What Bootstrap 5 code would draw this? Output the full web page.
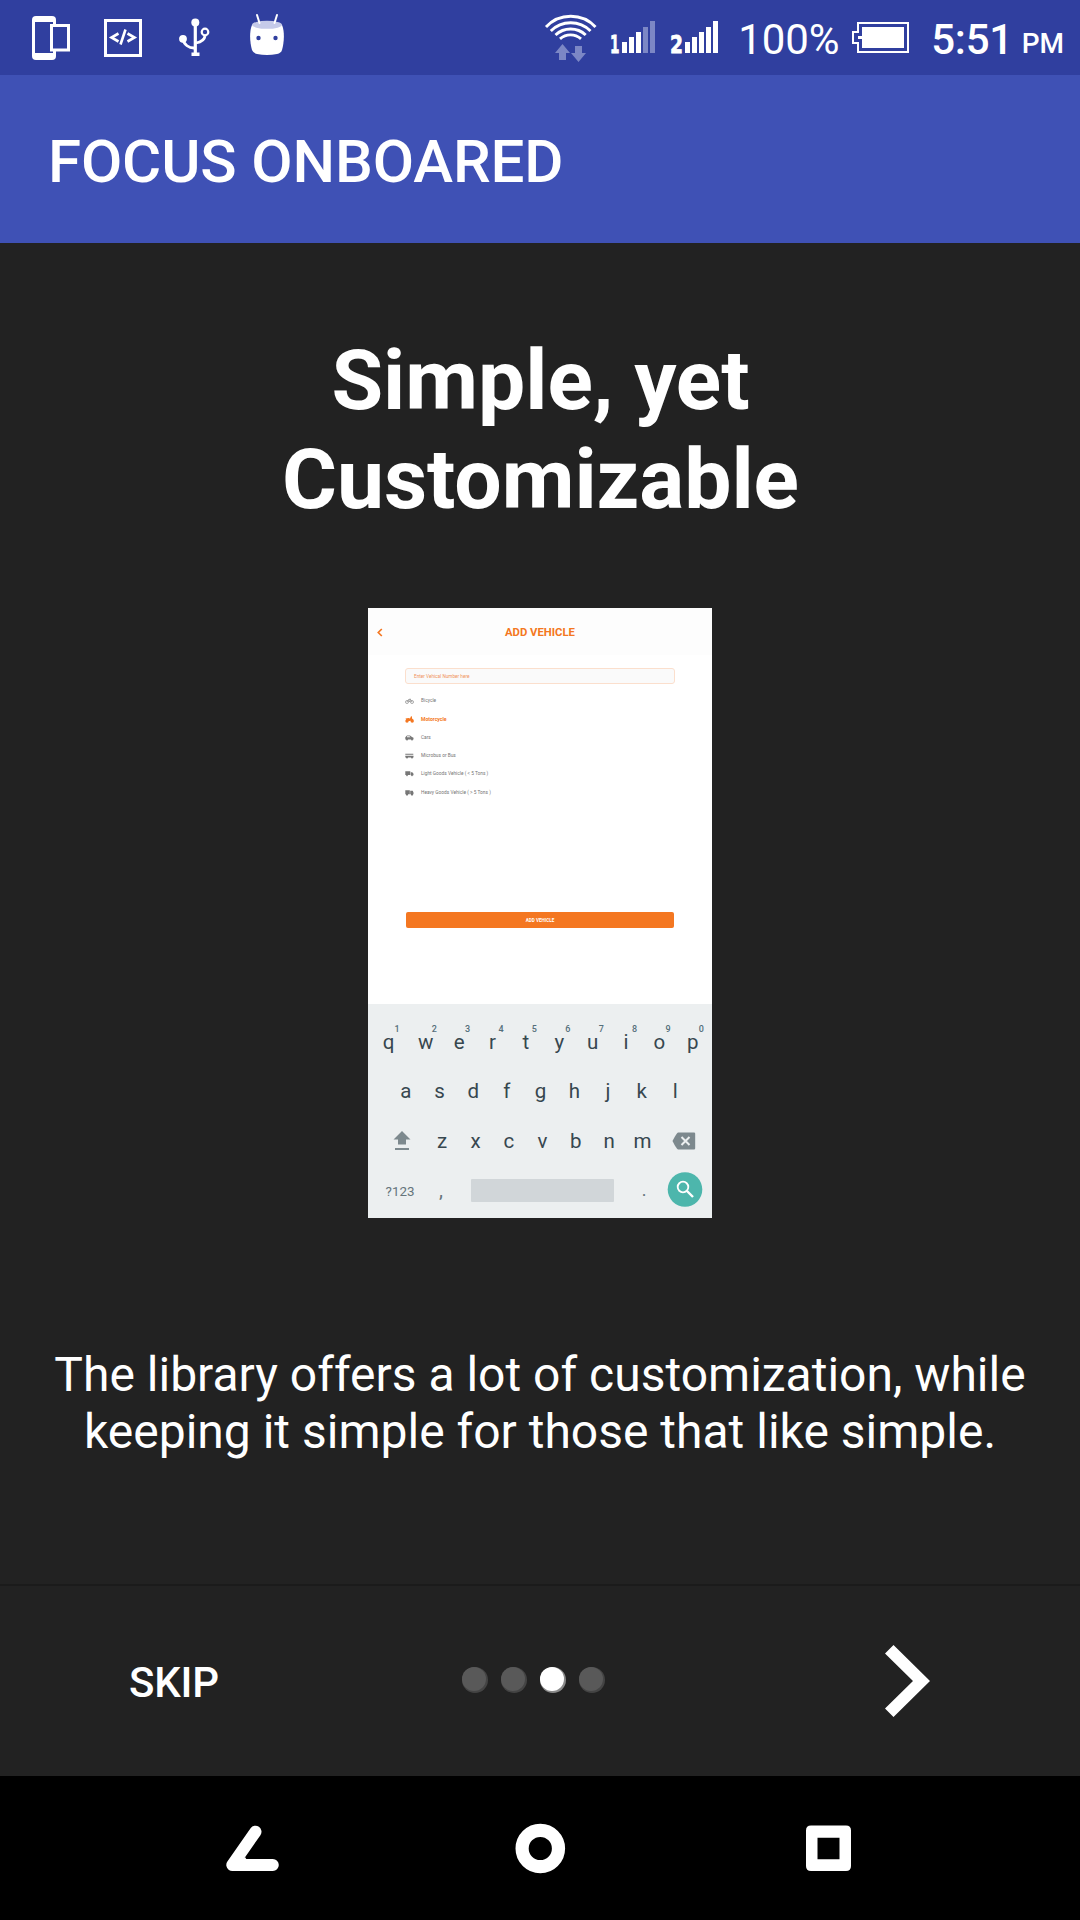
<!DOCTYPE html>
<html lang="en">
<head>
<meta charset="utf-8">
<meta name="viewport" content="width=device-width, initial-scale=1">
<title>Focus Onboared</title>
<link href="https://cdn.jsdelivr.net/npm/bootstrap@5.3.0/dist/css/bootstrap.min.css" rel="stylesheet">
<style>
body{font-family:Roboto,"Noto Sans",sans-serif;background:#222;color:#fff;width:1080px;height:1920px;overflow:hidden;margin:0}
svg{display:block;flex:none}
.status-bar{height:75px;background:#303f9f}
.status-bar svg{height:75px}
.battery-pct,.clock,.clock-pm{line-height:49px;white-space:nowrap}
.battery-pct{font-size:42px;margin-left:14px;margin-top:15px;width:118px;letter-spacing:-.1px}
.battery-icon{margin-left:-4px}
.clock{font-size:42px;font-weight:500;margin-left:21px;margin-top:15px;width:90.500px;letter-spacing:-.2px}
.clock-pm{font-size:28px;font-weight:500;margin-top:19px;margin-right:16px}
.app-bar{height:168px;background:#3f51b5;padding:5px 0 0 48px}
.app-title{font-size:60px;font-weight:500;line-height:70px;letter-spacing:-.13px}
.slide{height:1341px;padding-top:88px}
.slide-title{font-size:84px;font-weight:700;line-height:99px;width:601px;margin:0 0 0 1px;letter-spacing:-.05px}
.slide-text{font-size:48px;line-height:57px;margin:128px 0 0;white-space:nowrap}
.shot{width:344px;height:610px;margin-top:79px;background:#fff;color:#757575}
.shot-head{height:47px;background:#fdfdfd;color:#f47721;padding-left:9px;padding-top:1px}
.shot-head span{font-size:11.3px;font-weight:700;line-height:14px;width:70px;margin-left:122px;margin-top:1px;white-space:nowrap}
.shot-field{height:16px;margin:13px 37px 0 37px;border:1px solid #fbdfcd;border-radius:3px;background:#fafafa;color:#f0935a;font-size:4.7px;line-height:15px;padding-left:8px}
.veh-list{padding-top:8px}
.veh{font-size:4.8px;line-height:6px;height:18.3px;padding-left:37px;gap:7px}
.veh.active{color:#f47721;font-weight:700}
.veh.active span{font-size:5.1px}
.shot-btn{height:16px;margin:0 38px 76px;background:#f47721;color:#fff;border-radius:2px;font-size:4.6px;font-weight:700;line-height:17px}
.shot-body{height:349px}
.keys{height:214px;background:#eceff0;color:#37474f;font-size:20.500px;padding-top:14px}
.krow{height:49px;line-height:48px}
.krow>span{width:33.4px;text-align:center;flex:none;position:relative}
.krow>span.edge-key{width:41px}
.krow sup{position:absolute;left:calc(50% + 6px);top:-3px;font-size:9px;line-height:28px;color:#546e7a;font-weight:500}
.row-a{padding-left:21px}.krow.row-a>span{width:33.7px}
.row-z{padding-left:25px}
.row-z svg:first-child{margin-right:14.500px}
.row-z svg:last-child{margin-left:13px}
.krow>span.sym{width:30px;font-size:13.4px;font-weight:400;color:#66757c;padding-top:4px}
.krow>span.sym-num{margin:0 11px 0 17px}
.krow>span.sym-comma{font-size:20px;padding-top:0}
.krow>span.sym-dot{font-size:18px;margin-left:15px;padding-top:0}
.space-bar{width:143px;height:23px;background:#d1d6d9;border-radius:1px;margin:1px 0 0 15px}
.bottom-bar{height:192px;border-top:2px solid #1b1b1b}
.skip{font-size:42px;font-weight:500;line-height:49px;width:90px;margin:3px 0 0 129px;letter-spacing:-.2px}
.dots{gap:13px;margin-left:243px;margin-top:-2px}
.pager{width:26px;height:26px;border-radius:50%;background:#444}
.pager::before{content:"";display:block;width:24px;height:24px;border-radius:50%;background:#595959}
.pager.on{background:#8a8a8a}.pager.on::before{background:#fff}
.next-icon{margin-left:280px}
.nav-keys{height:144px;background:#000}
</style>
<script src="https://cdn.jsdelivr.net/npm/bootstrap@5.3.0/dist/js/bootstrap.bundle.min.js"></script>
</head>
<body class="d-flex flex-column">
<header class="status-bar d-flex justify-content-between flex-shrink-0">
  <div class="d-flex">
    <svg width="300" viewBox="0 0 300 75" fill="none" stroke="#fff">
      <rect x="32" y="16" width="24" height="44" rx="4" fill="#fff" stroke="none"/>
      <path fill="#303f9f" stroke="none" d="M35 22h18v31H35z"/>
      <path fill="#303f9f" stroke="none" d="M49 24h8v27h-8z"/>
      <rect x="51.500" y="25.500" width="17" height="24.500" stroke-width="3" fill="#303f9f"/>
      <rect x="105.500" y="20.500" width="35" height="35" stroke-width="3"/>
      <path stroke-width="2.600" d="M118.500 33.500l-7 4 7 4M127.500 33.500l7 4-7 4M125.500 29.500l-5 15"/>
      <circle cx="195.300" cy="22.500" r="4" fill="#fff" stroke="none"/>
      <path stroke-width="3.200" d="M195.300 22v33"/>
      <path stroke-width="2.800" d="M183 39c1 6 6 9 11 9M205 36c-.5 4-4 6-9 7"/>
      <circle cx="183" cy="38.800" r="3.900" fill="#fff" stroke="none"/>
      <circle cx="205" cy="32" r="3.300" stroke-width="2.200"/>
      <path fill="#fff" stroke="none" d="M191.500 52.500h8v3.500h-8z"/>
      <path fill="#fff" stroke="none" d="M252 25c-3 7-2 18 0 25q1 3 5 4 10 2 20 0 4-1 5-4c2-7 3-18 0-25z"/>
      <ellipse cx="267" cy="24.800" rx="15" ry="4" fill="#c5cae9" stroke="none"/>
      <path stroke-width="2" stroke-linecap="round" d="M259.500 23l-2.500-8M274.500 23l2.500-8"/>
      <g fill="#303f9f" stroke="none"><circle cx="258.500" cy="38" r="2.200"/><circle cx="275.500" cy="38" r="2.200"/></g>
    </svg>
  </div>
  <div class="d-flex">
    <svg width="182" viewBox="542 0 182 75" fill="none" stroke="#fff">
      <g stroke-width="2.900"><path d="M546 27a34 34 0 0 1 49.500 0M550.800 31a28 28 0 0 1 39.700 0M555.500 35a22 22 0 0 1 30.200 0M560 38.800a16 16 0 0 1 21 0"/></g>
      <g fill="#7c87c5" stroke="none"><path d="M562.500 44l7.500 9h-4v7h-7v-7h-4z"/><path d="M575 46h7v7h4l-7.500 9-7.500-9h4z"/></g>
      <g fill="#fff" stroke="none">
        <text x="610" y="53" font-family="DejaVu Sans" font-weight="700" font-size="25" textLength="9.500" lengthAdjust="spacingAndGlyphs" stroke="#fff" stroke-width=".8">1</text>
        <path d="M622 42h5v11h-5zM629 37h5v16h-5zM636 32h5v21h-5zM685 42h5v11h-5zM692 37h5v16h-5zM699 32h5v21h-5zM706 27h5v26h-5zM713 21h5v32h-5z"/>
        <path fill="#7c87c5" d="M643 27h5v26h-5zM650 21h5v32h-5z"/>
        <text x="670" y="53" font-family="DejaVu Sans" font-weight="700" font-size="25" textLength="13" lengthAdjust="spacingAndGlyphs" stroke="#fff" stroke-width=".8">2</text>
      </g>
    </svg>
    <span class="battery-pct">100%</span>
    <svg class="battery-icon" width="58" viewBox="852 0 58 75"><path fill="none" stroke="#fff" stroke-width="2" d="M858 32v-9h50v29h-50v-9h-5V32z"/><path fill="#fff" d="M862 27h42v21h-42v-9h-4v-3h4z"/></svg>
    <span class="clock">5:51</span>
    <span class="clock-pm">PM</span>
  </div>
</header>

<div class="app-bar d-flex align-items-center flex-shrink-0"><div class="app-title">FOCUS ONBOARED</div></div>

<main class="slide d-flex flex-column align-items-center flex-shrink-0">
  <h1 class="slide-title text-center">Simple, yet Customizable</h1>
  <section class="shot">
    <div class="shot-head d-flex align-items-center">
      <svg width="6" height="9" viewBox="0 0 6 9"><path d="M4.800 1L1.300 4.500 4.800 8" fill="none" stroke="#f47721" stroke-width="1.700"/></svg>
      <span>ADD VEHICLE</span>
    </div>
    <div class="shot-body d-flex flex-column">
      <div class="shot-field">Enter Vehical Number here</div>
      <div class="veh-list">
      <div class="veh d-flex align-items-center"><svg width="9" height="6" viewBox="0 0 9 6" fill="none" stroke="#888" stroke-width=".7"><circle cx="2" cy="4" r="1.500"/><circle cx="7" cy="4" r="1.500"/><path d="M2 4l1.500-2.500h2L7 4M5 .5v1M3.500 2L4.500 4l1-2.500"/></svg><span>Bicycle</span></div>
      <div class="veh active d-flex align-items-center"><svg width="9" height="7" viewBox="0 0 9 7" fill="#f47721"><circle cx="2" cy="5" r="1.700"/><circle cx="7.200" cy="5" r="1.700"/><path d="M.5 2.500l3-.5 1.500.5L6 .3l1 .2v2l1.500 1L5 5H2z"/></svg><span>Motorcycle</span></div>
      <div class="veh d-flex align-items-center"><svg width="9" height="6" viewBox="0 0 9 6" fill="#777"><path fill-rule="evenodd" d="M.3 2.300L2 .5h3l2 1.600 1.500.7v1.700H.3zM2 1.300v1h3.500L4.500 1.300z"/><circle cx="2" cy="4.500" r="1"/><circle cx="7" cy="4.500" r="1"/></svg><span>Cars</span></div>
      <div class="veh d-flex align-items-center"><svg width="9" height="6" viewBox="0 0 9 6" fill="#777"><path d="M.3.800h8v1H.3zM.3 2.800h8.200v1.700H.3z"/><circle cx="2" cy="4.600" r="1"/><circle cx="7" cy="4.600" r="1"/></svg><span>Microbus or Bus</span></div>
      <div class="veh d-flex align-items-center"><svg width="9" height="6" viewBox="0 0 9 6" fill="#777"><path d="M.3.300h5v3.700h-5zM5.800 1.300h1.500l1.200 1.500v1.400H5.800z"/><circle cx="2" cy="4.500" r=".8"/><circle cx="7" cy="4.500" r=".8"/></svg><span>Light Goods Vehicle ( &lt; 5 Tons )</span></div>
      <div class="veh d-flex align-items-center"><svg width="9" height="6" viewBox="0 0 9 6" fill="#777"><path d="M.3.300h4.500v4H.3zM5.200.800h2.500l.8 1.800v1.700H5.200z"/><circle cx="2" cy="4.600" r="1.100"/><circle cx="7" cy="4.600" r="1.100"/></svg><span>Heavy Goods Vehicle ( &gt; 5 Tons )</span></div>
      </div>
      <div class="shot-btn text-center mt-auto">ADD VEHICLE</div>
    </div>
    <div class="keys">
      <div class="krow d-flex"><span class="edge-key">q<sup>1</sup></span><span>w<sup>2</sup></span><span>e<sup>3</sup></span><span>r<sup>4</sup></span><span>t<sup>5</sup></span><span>y<sup>6</sup></span><span>u<sup>7</sup></span><span>i<sup>8</sup></span><span>o<sup>9</sup></span><span>p<sup>0</sup></span></div>
      <div class="krow row-a d-flex"><span>a</span><span>s</span><span>d</span><span>f</span><span>g</span><span>h</span><span>j</span><span>k</span><span>l</span></div>
      <div class="krow row-z d-flex align-items-center">
        <svg width="18" height="20" viewBox="0 0 18 20" fill="#7d898e"><path d="M9 0l8.500 8.500h-4.500v5H5v-5H.5zM2 17h14v2H2z"/></svg>
        <span>z</span><span>x</span><span>c</span><span>v</span><span>b</span><span>n</span><span>m</span>
        <svg width="24" height="18" viewBox="0 0 24 18"><path fill="#7d898e" d="M6 .5h16q1.200 0 1.200 1.200v14.600q0 1.200-1.200 1.200H6Q4.500 17 .5 9 4.500 1 6 .5z"/><path d="M9.500 5l8 8M17.500 5l-8 8" stroke="#eceff0" stroke-width="2"/></svg>
      </div>
      <div class="krow d-flex align-items-center">
        <span class="sym sym-num">?123</span><span class="sym sym-comma">,</span>
        <div class="space-bar"></div>
        <span class="sym sym-dot">.</span>
        <svg class="ms-2" width="36" height="36" viewBox="0 0 36 36"><circle cx="18" cy="17.500" r="17.300" fill="#4db6ac"/><circle cx="16" cy="15" r="5.300" fill="none" stroke="#fff" stroke-width="1.800"/><path d="M20 19l6 6" stroke="#fff" stroke-width="2.400"/></svg>
      </div>
    </div>
  </section>
  <p class="slide-text text-center">The library offers a lot of customization, while<br>keeping it simple for those that like simple.</p>
</main>

<footer class="bottom-bar d-flex align-items-center flex-shrink-0">
  <div class="skip">SKIP</div>
  <div class="dots d-flex"><i class="pager"></i><i class="pager"></i><i class="pager on"></i><i class="pager"></i></div>
  <svg class="next-icon" width="46" height="72" viewBox="0 0 46 72"><path d="M8.500 0L45 36 8.500 72 0 63.500 28 36 0 8.500z" fill="#fff"/></svg>
</footer>

<nav class="nav-keys d-flex flex-shrink-0">
  <svg width="1080" height="144" viewBox="0 1776 1080 144" fill="none" stroke="#fff">
    <path stroke-width="12" stroke-linecap="round" stroke-linejoin="round" d="M255.500 1831.700L232.300 1865h40.500"/>
    <path fill="#fff" stroke="none" d="M238 1865l7-8 5 8z"/>
    <circle cx="540.300" cy="1848.500" r="18.200" stroke-width="13.200"/>
    <path fill="#fff" stroke="none" fill-rule="evenodd" d="M811 1825.500h35q5 0 5 5v35.500q0 5-5 5h-35q-5 0-5-5v-35.500q0-5 5-5zM817.500 1837.700v21.500h22v-21.500z"/>
  </svg>
</nav>
</body>
</html>
